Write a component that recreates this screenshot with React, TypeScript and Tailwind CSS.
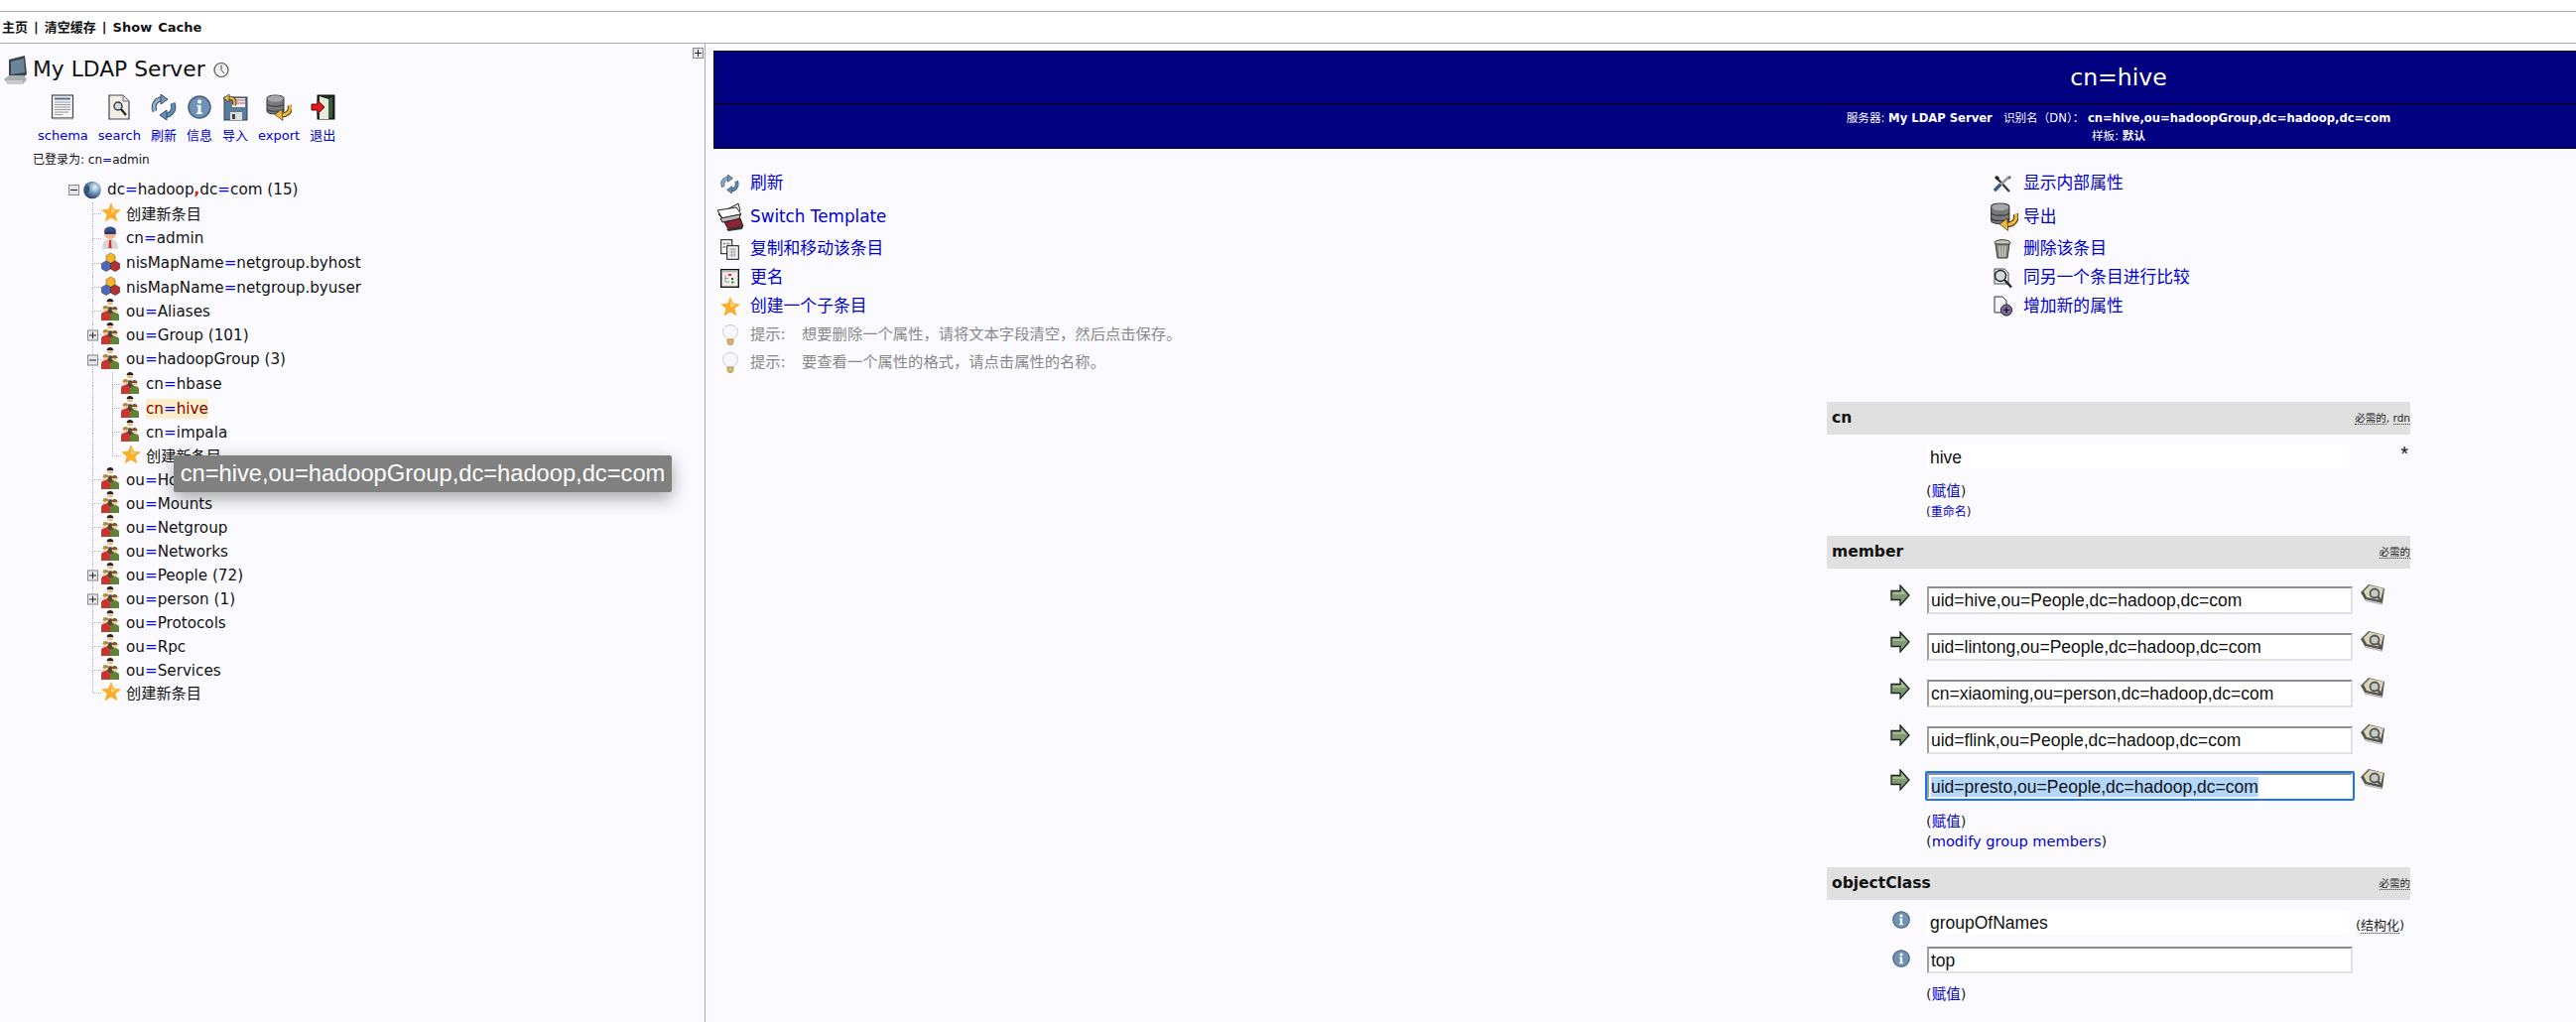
// phpLDAPadmin 条目页面
const S = ({ w, h, vb, children, className = '' }: { w: number; h: number; vb: string; children: React.ReactNode; className?: string }) => (
  <svg width={w} height={h} viewBox={vb} className={`shrink-0 ${className}`}>{children}</svg>
);

/* ---------- 图标 ---------- */
const ComputerIcon = () => (
  <S w={25} h={30} vb="0 0 25 30">
    <path d="M6 4 L22 0 L24 19 L21 21 L6 21 Z" fill="#39434c" />
    <path d="M8 6 L21 3 L22 17 L8 19 Z" fill="#6d8497" />
    <path d="M1 24 L6 20 L21 20 L24 24 L20 29 L5 29 Z" fill="#a9aeae" />
    <path d="M2 25 L20 25 L20 29 L5 29 Z" fill="#c9cccb" />
  </S>
);
const ClockIcon = () => (
  <S w={16} h={17} vb="0 0 16 17">
    <circle cx="8" cy="8.5" r="7" fill="#f3f3f3" stroke="#555" strokeWidth="1.2" />
    <path d="M8 3.5 V8.5 L11 12" fill="none" stroke="#444" strokeWidth="1" />
  </S>
);
const SchemaIcon = () => (
  <S w={24} h={26} vb="0 0 24 26">
    <rect x="1.5" y="1" width="21" height="23" fill="#f4f4f4" stroke="#444" strokeWidth="1.2" />
    <rect x="4" y="3.5" width="16" height="2" fill="#4d6f9c" />
    <path d="M4 8h16M4 10.5h16M4 13h16M4 15.5h16M4 18h14M4 20.5h8" stroke="#9a9a9a" strokeWidth="1.2" />
    <path d="M3 25h20" stroke="#bbb" />
  </S>
);
const SearchDocIcon = () => (
  <S w={22} h={26} vb="0 0 22 26">
    <path d="M1 1 H15 L21 7 V25 H1 Z" fill="#f2f0e6" stroke="#444" strokeWidth="1.2" />
    <path d="M15 1 V7 H21" fill="#ddd" stroke="#777" />
    <circle cx="10" cy="12" r="4" fill="#cfd8de" stroke="#333" strokeWidth="1.4" />
    <path d="M13 15 L18 21" stroke="#222" strokeWidth="2.2" />
  </S>
);
const RefreshIcon = ({ size = 26 }: { size?: number }) => (
  <S w={size} h={size} vb="0 0 26 26">
    <path d="M4 17 C1 9 7 4 13 5" fill="none" stroke="#3f4a5a" strokeWidth="5" />
    <path d="M4 17 C1 9 7 4 13 5" fill="none" stroke="#8eb2d6" strokeWidth="3" />
    <path d="M10 0 L17 5 L10 10 Z" fill="#6f97c0" stroke="#3f4a5a" />
    <path d="M22 9 C25 17 19 22 13 21" fill="none" stroke="#3f4a5a" strokeWidth="5" />
    <path d="M22 9 C25 17 19 22 13 21" fill="none" stroke="#5d90c4" strokeWidth="3" />
    <path d="M16 16 L9 21 L16 26 Z" fill="#5d90c4" stroke="#3f4a5a" />
  </S>
);
const InfoIcon = ({ size = 24 }: { size?: number }) => (
  <S w={size} h={size} vb="0 0 24 24">
    <circle cx="12" cy="12" r="11" fill="#6f93b8" stroke="#4a5f75" strokeWidth="1.5" />
    <circle cx="12" cy="6.5" r="2" fill="#fff" />
    <path d="M9.5 10h4v7.5h1.5v1.5h-6v-1.5h1.5v-6h-1z" fill="#fff" />
  </S>
);
const ImportIcon = () => (
  <S w={25} h={27} vb="0 0 25 27">
    <rect x="1" y="3" width="23" height="23" fill="#5c7c9c" stroke="#2e3e50" />
    <rect x="9" y="4" width="13" height="9" fill="#f4f4f4" />
    <path d="M9 6h13M9 9h13" stroke="#c55" />
    <rect x="7" y="18" width="12" height="8" fill="#ddd" />
    <rect x="9" y="20" width="3" height="5" fill="#444" />
    <path d="M11 11 C13 5 8 3 5 4" fill="none" stroke="#3a2c10" strokeWidth="4" />
    <path d="M11 11 C13 5 8 3 5 4" fill="none" stroke="#e9b64a" strokeWidth="2.4" />
    <path d="M6 0 L0 4 L6 8 Z" fill="#e9b64a" stroke="#3a2c10" strokeWidth=".7" />
  </S>
);
const ExportIcon = ({ w = 26, h = 27 }: { w?: number; h?: number }) => (
  <S w={w} h={h} vb="0 0 26 27">
    <path d="M1 4 C1 0 18 0 18 4 V17 C18 21 1 21 1 17 Z" fill="#77797c" stroke="#333" />
    <ellipse cx="9.5" cy="4.5" rx="8" ry="3.2" fill="#a5a7a9" />
    <path d="M1 10 C3 13 16 13 18 10 M1 15 C3 18 16 18 18 15" fill="none" stroke="#333" />
    <path d="M24 11 C26 18 20 21 16 21" fill="none" stroke="#4a3810" strokeWidth="5" />
    <path d="M24 11 C26 18 20 21 16 21" fill="none" stroke="#eeb93f" strokeWidth="3" />
    <path d="M16 15 L9 20.5 L17 26.5 Z" fill="#eeb93f" stroke="#4a3810" strokeWidth=".7" />
  </S>
);
const LogoutIcon = () => (
  <S w={25} h={26} vb="0 0 25 26">
    <rect x="7" y="1" width="17" height="24" fill="#1d2b1f" stroke="#111" />
    <path d="M9 2 L18 5 V25 H9 Z" fill="#e8ead9" />
    <path d="M18 5 L22 3 V23 L18 25 Z" fill="#3e5a40" />
    <path d="M1 10 H7 V6 L14 13 L7 20 V16 H1 Z" fill="#e01b1b" stroke="#5a0f0f" />
  </S>
);
const GlobeIcon = () => (
  <S w={18} h={19} vb="0 0 18 19">
    <defs>
      <radialGradient id="globe" cx="65%" cy="35%" r="70%">
        <stop offset="0" stopColor="#eef4fa" />
        <stop offset=".5" stopColor="#6d95bb" />
        <stop offset="1" stopColor="#1f3b5c" />
      </radialGradient>
    </defs>
    <circle cx="9" cy="9.5" r="8.8" fill="url(#globe)" />
    <path d="M2 6 C5 4 7 6 6 9 C5 12 4 13 3 12 Z" fill="#31516f" />
  </S>
);
const StarIcon = ({ size = 20 }: { size?: number }) => (
  <S w={size} h={size} vb="0 0 20 20">
    <path d="M10 0 L12.8 6.8 L20 7.4 L14.4 12 L16.4 19.6 L10 15.4 L3.6 19.6 L5.6 12 L0 7.4 L7.2 6.8 Z" fill="#fbae2c" />
    <path d="M10 3 L11.5 7.5 L16 8 L10 11 Z" fill="#fdd07a" />
  </S>
);
const UserIcon = () => (
  <S w={18} h={24} vb="0 0 18 24">
    <path d="M1 24 C1 15 5 14 9 14 C13 14 17 15 17 24 Z" fill="#d7d5d5" />
    <path d="M8 15 H10 L10.5 23 H7.5 Z" fill="#d92b2b" />
    <circle cx="9" cy="8" r="6" fill="#f2b58c" />
    <path d="M3 6 C3 0 15 0 15 6 Z" fill="#3e4f86" />
    <rect x="3" y="6" width="12" height="3" rx="1.5" fill="#2b3a70" />
  </S>
);
const CubesIcon = () => (
  <S w={19} h={20} vb="0 0 19 20">
    <path d="M9.5 1 L14 3.5 V9 L9.5 11.5 L5 9 V3.5 Z" fill="#f4b52c" stroke="#8a6a16" strokeWidth=".6" />
    <path d="M5 9 L9.5 11.5 V17 L5 19.5 L.5 17 V11.5 Z" fill="#5068b8" stroke="#2e3a70" strokeWidth=".6" />
    <path d="M14 9 L18.5 11.5 V17 L14 19.5 L9.5 17 V11.5 Z" fill="#b2322f" stroke="#5a1a18" strokeWidth=".6" />
  </S>
);
const OuIcon = () => (
  <S w={18} h={22} vb="0 0 18 22">
    <circle cx="9" cy="3.5" r="3" fill="#e9bd8d" />
    <path d="M5.5 3 C6 -1 12 -1 12.5 3 Z" fill="#222" />
    <path d="M5 12 C5 7 13 7 13 12 V16 H5 Z" fill="#4a4436" />
    <circle cx="4.5" cy="10" r="2.8" fill="#eec39a" />
    <path d="M1.5 10 C1.5 6 7.5 6 7.5 10 Z" fill="#b08a3a" />
    <path d="M0 22 V16 C0 12 9 12 9 16 V22 Z" fill="#c8372f" />
    <circle cx="13.5" cy="11" r="2.8" fill="#eec39a" />
    <path d="M10.5 11 C10.5 7 16.5 7 16.5 11 Z" fill="#7a5a2a" />
    <path d="M9 22 V17 C9 13 18 13 18 17 V22 Z" fill="#5f8236" />
  </S>
);
const TemplateIcon = () => (
  <S w={28} h={29} vb="0 0 28 29">
    <path d="M2 12 L22 1 L24 8 L5 15 Z" fill="#e6e6e6" stroke="#222" />
    <path d="M1 8 L20 5 L25 12 L6 16 Z" fill="#fff" stroke="#222" />
    <path d="M4 16 L24 12 L23 17 L6 20 Z" fill="#bbb" stroke="#222" />
    <path d="M8 20 L24 16 L27 24 L12 27 Z" fill="#8c2434" stroke="#222" />
    <path d="M10 27 L27 24 L26 27 L12 29 Z" fill="#333" />
  </S>
);
const CopyIcon = () => (
  <S w={19} h={21} vb="0 0 19 21">
    <rect x=".7" y=".7" width="11" height="14" fill="#fff" stroke="#111" />
    <path d="M2.5 3.5h3v2h-3zM6.5 3.5h3v2h-3zM2.5 7h3v2h-3z" fill="#999" />
    <rect x="6.7" y="6.7" width="11.6" height="13.6" fill="#f4f4f4" stroke="#111" />
    <path d="M9 10h7M9 13h7M9 16h7M11.5 9v9M14 9v9" stroke="#999" strokeWidth=".8" />
  </S>
);
const RenameIcon = () => (
  <S w={19} h={19} vb="0 0 19 19">
    <rect x=".7" y=".7" width="17.6" height="17.6" fill="#efefe8" stroke="#111" strokeWidth="1.4" />
    <rect x="1.5" y="1.5" width="16" height="2" fill="#bbb" />
    <path d="M5 6v7h4M5 9.5h3" fill="none" stroke="#999" />
    <rect x="8" y="5" width="3" height="2" fill="#d33" />
    <rect x="11" y="9" width="2" height="2" fill="#444" />
    <rect x="11" y="12.5" width="2.5" height="2" fill="#2a9a3a" />
  </S>
);
const BulbIcon = () => (
  <S w={16} h={21} vb="0 0 16 21">
    <path d="M8 .5 C3 .5 .5 4 .5 7.5 C.5 11 4 12.5 5 15 H11 C12 12.5 15.5 11 15.5 7.5 C15.5 4 13 .5 8 .5 Z" fill="#f6f7f8" stroke="#c9cdd1" />
    <path d="M5 15 H11 V19 L9.5 20.5 H6.5 L5 19 Z" fill="#d9b468" stroke="#9a8140" strokeWidth=".6" />
  </S>
);
const ToolsIcon = () => (
  <S w={19} h={19} vb="0 0 19 19">
    <path d="M3 3 L16 17" stroke="#333" strokeWidth="2.2" />
    <path d="M16 2 L6 11" stroke="#999" strokeWidth="2.4" />
    <path d="M16 1 L18 3 L15 5 Z" fill="#555" />
    <path d="M6 11 L2 15" stroke="#3b5c84" strokeWidth="3.6" strokeLinecap="round" />
    <path d="M1 3 L3 1 L6 3 L4 6 Z" fill="#222" />
  </S>
);
const TrashIcon = () => (
  <S w={18} h={20} vb="0 0 18 20">
    <ellipse cx="9" cy="3.5" rx="8" ry="2.8" fill="#c9c7bc" stroke="#333" />
    <path d="M2 5 L4 19 H14 L16 5 Z" fill="#8f8d84" stroke="#333" />
    <path d="M6 7 L6.8 18M9 7V18M12 7L11.2 18" stroke="#ddd" />
  </S>
);
const CompareIcon = () => (
  <S w={19} h={21} vb="0 0 19 21">
    <path d="M1 1 H11 L15 5 V16 H1 Z" fill="#f4f4f4" stroke="#444" />
    <circle cx="7" cy="8" r="5.5" fill="#d6dde2" stroke="#222" strokeWidth="1.4" />
    <path d="M11 12 L18 19.5" stroke="#222" strokeWidth="2.4" />
  </S>
);
const AddAttrIcon = () => (
  <S w={19} h={21} vb="0 0 19 21">
    <path d="M1 1 H9 L13 5 V17 H1 Z" fill="#f4f4f4" stroke="#333" />
    <circle cx="13" cy="14.5" r="5.6" fill="#7c6a9c" stroke="#222" />
    <path d="M10 14.5h6M13 11.5v6" stroke="#111" strokeWidth="1.2" />
  </S>
);
const ArrowIcon = () => (
  <S w={20} h={22} vb="0 0 20 22">
    <path d="M1 6.5 H10 V1 L19 11 L10 21 V15.5 H1 Z" fill="#7d9a70" stroke="#222" strokeWidth="1.3" />
    <path d="M2.5 8 H11 V4 L16 10 H2.5 Z" fill="#a4bd96" />
  </S>
);
const BookSearchIcon = () => (
  <S w={28} h={24} vb="0 0 28 24">
    <path d="M1 10 L9 2 L25 6 L23 21 L5 17 Z" fill="#56564a" />
    <path d="M4 9 L10 3 L24 6 L21 18 L7 15 Z" fill="#d9d6bd" />
    <circle cx="15" cy="11" r="4.5" fill="#c6cdc9" stroke="#555" strokeWidth="1.8" />
    <path d="M18 14 L22 19" stroke="#555" strokeWidth="2.4" />
    <path d="M5 18 L23 22" stroke="#bbb" strokeWidth="1.5" />
  </S>
);

/* ---------- 左侧树 ---------- */
const ExpandBox = ({ open }: { open: boolean }) => (
  <span className="flex h-[11px] w-[11px] items-center justify-center border border-[#888] bg-[#e4e8ea] text-[#222]">
    <svg width="7" height="7" viewBox="0 0 7 7">
      <path d={open ? 'M0 3.5H7' : 'M0 3.5H7M3.5 0V7'} stroke="#222" strokeWidth="1" />
    </svg>
  </span>
);

const Guide = ({ w, last, expand }: { w: 'short' | 'long'; last?: boolean; expand?: 'plus' | 'minus' }) => (
  <span className={`relative flex h-full shrink-0 flex-col ${w === 'short' ? 'w-[9px]' : 'w-[20px]'}`}>
    <span className={`h-1/2 border-l border-dotted border-[#b5b5b5] ${w === 'short' ? 'border-b' : ''}`} />
    <span className={last ? '' : 'flex-1 border-l border-dotted border-[#b5b5b5]'} />
    {expand && (
      <span className="absolute top-1/2 -left-[5px] -translate-y-1/2">
        <ExpandBox open={expand === 'minus'} />
      </span>
    )}
  </span>
);

const Dn = ({ text }: { text: string }) => (
  <>
    {text.split('=').map((part, i) => (
      <span key={i}>
        {i > 0 && <span className="text-[#0000ff]">=</span>}
        {part}
      </span>
    ))}
  </>
);

type Node = {
  label: string;
  icon: 'star' | 'user' | 'cubes' | 'ou';
  h: string;
  level?: 3;
  expand?: 'plus' | 'minus';
  last?: boolean;
  active?: boolean;
};

const nodes: Node[] = [
  { label: '创建新条目', icon: 'star', h: 'h-[24px]' },
  { label: 'cn=admin', icon: 'user', h: 'h-[25px]' },
  { label: 'nisMapName=netgroup.byhost', icon: 'cubes', h: 'h-[25px]' },
  { label: 'nisMapName=netgroup.byuser', icon: 'cubes', h: 'h-[24px]' },
  { label: 'ou=Aliases', icon: 'ou', h: 'h-[24px]' },
  { label: 'ou=Group (101)', icon: 'ou', h: 'h-[24px]', expand: 'plus' },
  { label: 'ou=hadoopGroup (3)', icon: 'ou', h: 'h-[25px]', expand: 'minus' },
  { label: 'cn=hbase', icon: 'ou', h: 'h-[25px]', level: 3 },
  { label: 'cn=hive', icon: 'ou', h: 'h-[24px]', level: 3, active: true },
  { label: 'cn=impala', icon: 'ou', h: 'h-[24px]', level: 3 },
  { label: '创建新条目', icon: 'star', h: 'h-[24px]', level: 3, last: true },
  { label: 'ou=Hosts', icon: 'ou', h: 'h-[24px]' },
  { label: 'ou=Mounts', icon: 'ou', h: 'h-[24px]' },
  { label: 'ou=Netgroup', icon: 'ou', h: 'h-[24px]' },
  { label: 'ou=Networks', icon: 'ou', h: 'h-[24px]' },
  { label: 'ou=People (72)', icon: 'ou', h: 'h-[24px]', expand: 'plus' },
  { label: 'ou=person (1)', icon: 'ou', h: 'h-[24px]', expand: 'plus' },
  { label: 'ou=Protocols', icon: 'ou', h: 'h-[24px]' },
  { label: 'ou=Rpc', icon: 'ou', h: 'h-[24px]' },
  { label: 'ou=Services', icon: 'ou', h: 'h-[24px]' },
  { label: '创建新条目', icon: 'star', h: 'h-[22px]', last: true },
];

const NodeIcon = ({ icon }: { icon: Node['icon'] }) => {
  if (icon === 'star') return <StarIcon />;
  if (icon === 'user') return <UserIcon />;
  if (icon === 'cubes') return <CubesIcon />;
  return <OuIcon />;
};

const TreeRow = ({ node }: { node: Node }) => (
  <div className={`flex items-center pl-[93px] text-[15.2px] text-[#111] ${node.h}`}>
    {node.level === 3 ? (
      <>
        <Guide w="long" />
        <Guide w="short" last={node.last} />
      </>
    ) : (
      <Guide w="short" last={node.last} expand={node.expand} />
    )}
    <span className="flex w-[25px] shrink-0 -translate-y-[2px] items-center">
      <NodeIcon icon={node.icon} />
    </span>
    {node.active ? (
      <span className="bg-[#fdeecb] px-0 leading-[20px] text-[#800000]">
        <Dn text={node.label} />
      </span>
    ) : (
      <span className="whitespace-nowrap">
        <Dn text={node.label} />
      </span>
    )}
  </div>
);

const tools = [
  { label: 'schema', icon: <SchemaIcon /> },
  { label: 'search', icon: <SearchDocIcon /> },
  { label: '刷新', icon: <RefreshIcon /> },
  { label: '信息', icon: <InfoIcon /> },
  { label: '导入', icon: <ImportIcon /> },
  { label: 'export', icon: <ExportIcon /> },
  { label: '退出', icon: <LogoutIcon /> },
];

const Sidebar = () => (
  <aside className="relative w-[711px] shrink-0 border-r border-[#aaaac4]">
    <span className="absolute top-[4px] right-[1px]">
      <ExpandBox open={false} />
    </span>

    <div className="mt-[11px] flex h-[31px] items-center pl-[3px]">
      <ComputerIcon />
      <span className="ml-[5px] text-[21.8px] text-[#111]">My LDAP Server</span>
      <span className="ml-[8px]">
        <ClockIcon />
      </span>
    </div>

    <div className="mt-[8px] flex gap-[10px] pl-[38px]">
      {tools.map(t => (
        <div key={t.label} className="flex flex-col items-center">
          <span className="flex h-[28px] items-center">{t.icon}</span>
          <span className="mt-[7px] text-[13px] leading-[16px] whitespace-nowrap text-[#0000cc]">{t.label}</span>
        </div>
      ))}
    </div>

    <div className="mt-[8px] pl-[33px] text-[12px] leading-[16px] text-[#111]">
      已登录为: <Dn text="cn=admin" />
    </div>

    <div className="mt-[9px] flex h-[26px] items-center pl-[69px] text-[15.2px] text-[#111]">
      <ExpandBox open />
      <span className="ml-[4px]">
        <GlobeIcon />
      </span>
      <span className="ml-[6px]">
        <Dn text="dc=hadoop" />
        <span className="font-bold text-[#e01010]">,</span>
        <Dn text="dc=com" /> (15)
      </span>
    </div>

    {nodes.map((n, i) => (
      <TreeRow key={i} node={n} />
    ))}

    {/* 浏览器 tooltip */}
    <div className="absolute top-[415px] left-[175px] flex h-[37px] w-[502px] items-center justify-center rounded-[2px] bg-[#808080] font-['Liberation_Sans',sans-serif] text-[23.7px] whitespace-nowrap text-white shadow-[0_6px_18px_rgba(0,0,0,0.35)]">
      cn=hive,ou=hadoopGroup,dc=hadoop,dc=com
    </div>
  </aside>
);

/* ---------- 右侧内容 ---------- */
const Action = ({ icon, children, shift }: { icon: React.ReactNode; children: React.ReactNode; shift?: boolean }) => (
  <div className="flex items-center text-[16.8px] text-[#0000cc]">
    <span className={`flex shrink-0 items-center ${shift ? '-ml-[4px] w-[34px]' : 'w-[30px]'}`}>{icon}</span>
    <span className="whitespace-nowrap">{children}</span>
  </div>
);

const Hint = ({ children }: { children: React.ReactNode }) => (
  <div className="flex items-center text-[15.3px] text-[#888]">
    <span className="flex w-[30px] shrink-0 items-center pl-[2px]">
      <BulbIcon />
    </span>
    <span className="w-[52px] shrink-0">提示:</span>
    <span className="whitespace-nowrap">{children}</span>
  </div>
);

const actionRows = [
  { h: 'h-[32px]', l: <Action icon={<RefreshIcon size={19} />}>刷新</Action>, r: <Action icon={<ToolsIcon />}>显示内部属性</Action> },
  { h: 'h-[35px]', l: <Action shift icon={<TemplateIcon />}>Switch Template</Action>, r: <Action shift icon={<ExportIcon w={29} h={29} />}>导出</Action> },
  { h: 'h-[30px]', l: <Action icon={<CopyIcon />}>复制和移动该条目</Action>, r: <Action icon={<TrashIcon />}>删除该条目</Action> },
  { h: 'h-[28px]', l: <Action icon={<RenameIcon />}>更名</Action>, r: <Action icon={<CompareIcon />}>同另一个条目进行比较</Action> },
  { h: 'h-[29px]', l: <Action icon={<StarIcon />}>创建一个子条目</Action>, r: <Action icon={<AddAttrIcon />}>增加新的属性</Action> },
];

const AttrBar = ({ name, children }: { name: string; children: React.ReactNode }) => (
  <div className="flex h-[33px] items-center justify-between bg-[#e0e0e0] pl-[5px]">
    <span className="text-[15.5px] font-bold text-[#111]">{name}</span>
    <span className="text-[10.5px] text-[#222]">{children}</span>
  </div>
);

const Abbr = ({ children }: { children: React.ReactNode }) => (
  <span className="border-b border-dotted border-[#333]">{children}</span>
);

const fieldFrame = 'w-[429px] border-2 border-t-[#8e8e8e] border-r-[#e2e2e2] border-b-[#e2e2e2] border-l-[#a0a0a0] bg-white px-[2px] pt-[1px] text-[#111] outline-none';

const MemberRow = ({ value, h, selected }: { value: string; h: string; selected?: boolean }) => (
  <div className={`flex items-start font-['Liberation_Sans',sans-serif] text-[17.5px] ${h}`}>
    <span className="w-[101px] shrink-0 pl-[64px]">
      <span className="block -translate-y-[2px]">
        <ArrowIcon />
      </span>
    </span>
    {selected ? (
      <div className="-ml-[2px] h-[30px] w-[433px] rounded-[2px] border-2 border-[#1b75e8]">
        <div className="flex h-full w-full items-center border-2 border-t-[#8e8e8e] border-r-white border-b-white border-l-[#a0a0a0] bg-white px-[2px] pt-[1px] text-[#111]">
          <span className="bg-[#b4d7fd] leading-[20px] whitespace-nowrap">{value}</span>
        </div>
      </div>
    ) : (
      <input readOnly value={value} className={`h-[28px] ${fieldFrame}`} />
    )}
    <span className={`-translate-y-[4px] ${selected ? 'ml-[5px]' : 'ml-[7px]'}`}>
      <BookSearchIcon />
    </span>
  </div>
);

const SmallLink = ({ children, className }: { children: React.ReactNode; className: string }) => (
  <div className={`pl-[100px] text-[#222] ${className}`}>
    (<span className="text-[#0000cc]">{children}</span>)
  </div>
);

const EntryPanel = () => (
  <main className="min-w-0 flex-1 overflow-hidden pt-[7px] pl-[8px]">
    <div className="w-[2832px]">
      <header className="border border-black bg-[#000080] text-white">
        <div className="flex h-[53px] items-center justify-center border-b border-black pt-[2px] text-[23.6px]">cn=hive</div>
        <div className="flex h-[44px] flex-col items-center justify-center pt-[2px] text-[11.6px] leading-[18px]">
          <div>
            服务器: <b>My LDAP Server</b>&nbsp;&nbsp; 识别名{'\uFF08'}DN{'\uFF09\uFF1A'} <b>cn=hive,ou=hadoopGroup,dc=hadoop,dc=com</b>
          </div>
          <div>
            样板: <b>默认</b>
          </div>
        </div>
      </header>

      <section className="mt-[19px] pl-[7px]">
        {actionRows.map((row, i) => (
          <div key={i} className={`grid grid-cols-[1283px_1fr] items-center ${row.h}`}>
            {row.l}
            {row.r}
          </div>
        ))}
        <div className="flex h-[28px] items-center">
          <Hint>{'想要删除一个属性\uFF0C请将文本字段清空\uFF0C然后点击保存\u3002'}</Hint>
        </div>
        <div className="flex h-[28px] items-center">
          <Hint>{'要查看一个属性的格式\uFF0C请点击属性的名称\u3002'}</Hint>
        </div>
      </section>

      <section className="mx-auto mt-[26px] w-[588px]">
        <AttrBar name="cn">
          <Abbr>必需的</Abbr>, <Abbr>rdn</Abbr>
        </AttrBar>
        <div className="mt-[10px] flex h-[24px] items-start justify-between pl-[101px] font-['Liberation_Sans',sans-serif] text-[17.5px]">
          <div className="flex h-full w-[425px] items-center bg-white pt-[2px] pl-[3px] text-[#111]">hive</div>
          <span className="pr-[2px] text-[20px] leading-[18px] text-[#111]">*</span>
        </div>
        <SmallLink className="mt-[13px] text-[14.5px] leading-[20px]">赋值</SmallLink>
        <SmallLink className="text-[12px] leading-[22px]">重命名</SmallLink>

        <div className="mt-[13px]">
          <AttrBar name="member">
            <Abbr>必需的</Abbr>
          </AttrBar>
        </div>
        <div className="mt-[18px]">
          <MemberRow h="h-[47px]" value="uid=hive,ou=People,dc=hadoop,dc=com" />
          <MemberRow h="h-[47px]" value="uid=lintong,ou=People,dc=hadoop,dc=com" />
          <MemberRow h="h-[47px]" value="cn=xiaoming,ou=person,dc=hadoop,dc=com" />
          <MemberRow h="h-[45px]" value="uid=flink,ou=People,dc=hadoop,dc=com" />
          <MemberRow h="h-[41px]" value="uid=presto,ou=People,dc=hadoop,dc=com" selected />
        </div>
        <SmallLink className="text-[14.5px] leading-[20px]">赋值</SmallLink>
        <SmallLink className="text-[14.6px] leading-[20px]">modify group members</SmallLink>

        <div className="mt-[16px]">
          <AttrBar name="objectClass">
            <Abbr>必需的</Abbr>
          </AttrBar>
        </div>
        <div className="mt-[11px] flex h-[24px] items-start font-['Liberation_Sans',sans-serif] text-[17.5px]">
          <span className="w-[101px] shrink-0 pl-[66px]">
            <InfoIcon size={18} />
          </span>
          <div className="flex h-full w-[425px] items-center bg-white pt-[1px] pl-[3px] text-[#111]">groupOfNames</div>
          <span className="mt-[5px] ml-[7px] font-['DejaVu_Sans','Noto_Sans_CJK_SC',sans-serif] text-[13px] whitespace-nowrap text-[#222]">
            (<Abbr>结构化</Abbr>)
          </span>
        </div>
        <div className="mt-[12px] flex h-[27px] items-start font-['Liberation_Sans',sans-serif] text-[17.5px]">
          <span className="w-[101px] shrink-0 pl-[66px] pt-[3px]">
            <InfoIcon size={18} />
          </span>
          <input readOnly value="top" className={`h-[27px] ${fieldFrame}`} />
        </div>
        <SmallLink className="mt-[11px] text-[14.5px] leading-[20px]">赋值</SmallLink>
      </section>
    </div>
  </main>
);

export default function App() {
  return (
    <div className="flex h-[1030px] w-[2596px] flex-col overflow-hidden bg-[#fbfbff] font-['DejaVu_Sans','Noto_Sans_CJK_SC',sans-serif]">
      <div className="h-[12px] shrink-0 border-b border-[#aaaac4] bg-white" />
      <nav className="flex h-[32px] shrink-0 items-center border-b border-[#aaaac4] bg-white pl-[2px] text-[13px] font-bold text-[#111] [word-spacing:1.5px]">
        主页 | 清空缓存 | Show Cache
      </nav>
      <div className="flex min-h-0 flex-1">
        <Sidebar />
        <EntryPanel />
      </div>
    </div>
  );
}
